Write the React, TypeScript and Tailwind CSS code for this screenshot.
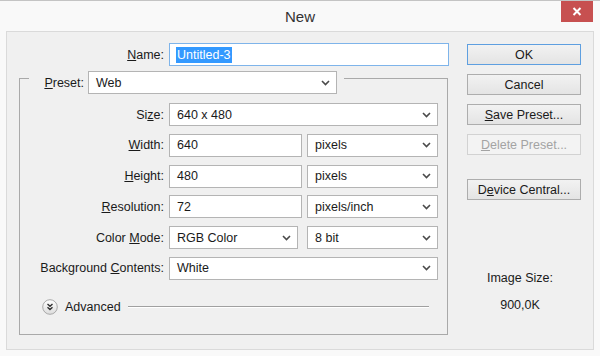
import React from "react";

const font = { fontFamily: '"Liberation Sans", Arial, sans-serif' };

// label with an access-key letter underlined
function Label({ text, u, className = "" }: { text: string; u: number; className?: string }) {
  return (
    <span className={className}>
      {text.slice(0, u)}
      <span className="underline underline-offset-1">{text[u]}</span>
      {text.slice(u + 1)}
    </span>
  );
}

function Chevron() {
  return (
    <svg width="9" height="6" viewBox="0 0 9 6" className="shrink-0">
      <path d="M1 1 L4.5 4.5 L8 1" fill="none" stroke="#4a4a4a" strokeWidth="1.6" />
    </svg>
  );
}

function Select({ value, w }: { value: string; w: string }) {
  return (
    <div className={`${w} flex h-[23px] items-center justify-between border border-[#b4b4b4] bg-white pl-[7px] pr-[6px]`}>
      <span>{value}</span>
      <Chevron />
    </div>
  );
}

function Input({ value, w }: { value: string; w: string }) {
  return (
    <div className={`${w} flex h-[23px] items-center border border-[#b4b4b4] bg-white pl-[7px]`}>
      {value}
    </div>
  );
}

function Btn({ children, primary, disabled }: { children: React.ReactNode; primary?: boolean; disabled?: boolean }) {
  return (
    <div
      className={
        "flex h-[21px] w-[114px] items-center justify-center border " +
        (disabled
          ? "border-[#d2d2d2] bg-[#f3f3f3] text-[#a3a3a3]"
          : primary
            ? "border-[#5e9fe0] bg-linear-to-b from-[#f2f2f2] to-[#e4e4e4]"
            : "border-[#adadad] bg-linear-to-b from-[#f2f2f2] to-[#e4e4e4]")
      }
    >
      {children}
    </div>
  );
}

function Row({ label, children }: { label: React.ReactNode; children: React.ReactNode }) {
  return (
    <div className="flex h-[23px] items-center">
      <div className="w-[144px] text-right">{label}</div>
      <div className="ml-[5px] flex items-center">{children}</div>
    </div>
  );
}

export default function App() {
  return (
    <div
      style={font}
      className="h-[356px] w-[600px] overflow-hidden border-t border-[#c4c4c4] bg-[#f9f9f9] text-[12.5px] leading-4 text-[#1a1a1a]"
    >
      {/* title bar */}
      <div className="flex h-[30px]">
        <div className="w-[39px]" />
        <div className="flex flex-1 items-center justify-center pt-[1px] text-[15px] text-[#333]">New</div>
        <div className="mr-[7px] flex h-[21px] w-[32px] items-center justify-center bg-[#c75050]">
          <svg width="10" height="9" viewBox="0 0 10 9">
            <path d="M1.5 1 L8.5 8 M8.5 1 L1.5 8" stroke="#fff" strokeWidth="2" />
          </svg>
        </div>
      </div>

      {/* dialog body */}
      <div className="ml-[6px] flex h-[319px] w-[588px] border border-[#dadada] bg-[#f0f0f0]">
        <div className="w-[442px]">
          <div className="mt-[11px] flex items-center">
            <div className="w-[157px] text-right">
              <Label text="Name:" u={0} />
            </div>
            <div className="ml-[5px] flex h-[23px] w-[280px] items-center border border-[#7eb4ea] bg-white pl-[6px]">
              <span className="bg-[#3399ff] px-[1px] text-white">Untitled-3</span>
            </div>
          </div>

          <div className="ml-[12px] mt-[12px] h-[257px] w-[429px] border border-[#a9a9a9]">
            <div className="-mt-[8px] ml-[9px] flex w-fit items-center bg-[#f0f0f0] pl-[9px] pr-[7px]">
              <div className="w-[46px] text-right">
                <Label text="Preset:" u={0} />
              </div>
              <div className="ml-[4px]">
                <Select value="Web" w="w-[249px]" />
              </div>
            </div>

            <div className="mt-[9px] flex flex-col gap-[7.8px]">
              <Row label={<Label text="Size:" u={2} />}>
                <Select value="640 x 480" w="w-[269px]" />
              </Row>
              <Row label={<Label text="Width:" u={0} />}>
                <Input value="640" w="w-[133px]" />
                <div className="ml-[5px]">
                  <Select value="pixels" w="w-[131px]" />
                </div>
              </Row>
              <Row label={<Label text="Height:" u={0} />}>
                <Input value="480" w="w-[133px]" />
                <div className="ml-[5px]">
                  <Select value="pixels" w="w-[131px]" />
                </div>
              </Row>
              <Row label={<Label text="Resolution:" u={0} />}>
                <Input value="72" w="w-[133px]" />
                <div className="ml-[5px]">
                  <Select value="pixels/inch" w="w-[131px]" />
                </div>
              </Row>
              <Row label={<Label text="Color Mode:" u={6} />}>
                <Select value="RGB Color" w="w-[129px]" />
                <div className="ml-[9px]">
                  <Select value="8 bit" w="w-[131px]" />
                </div>
              </Row>
              <Row label={<Label text="Background Contents:" u={11} />}>
                <Select value="White" w="w-[269px]" />
              </Row>
            </div>

            <div className="ml-[22px] mr-[18px] mt-[19px] flex items-center">
              <svg width="16" height="16" viewBox="0 0 16 16" className="shrink-0">
                <defs>
                  <linearGradient id="adv" x1="0" y1="0" x2="0" y2="1">
                    <stop offset="0" stopColor="#ffffff" />
                    <stop offset="1" stopColor="#dcdcdc" />
                  </linearGradient>
                </defs>
                <circle cx="8" cy="8" r="7.3" fill="url(#adv)" stroke="#a9a9a9" />
                <path d="M5.5 5 L8 7.3 L10.5 5 M5.5 8.3 L8 10.6 L10.5 8.3" fill="none" stroke="#333" strokeWidth="1.4" />
              </svg>
              <span className="ml-[7px]">Advanced</span>
              <div className="ml-[7px] h-[2px] flex-1 border-t border-[#a0a0a0] border-b border-b-white" />
            </div>
          </div>
        </div>

        {/* buttons */}
        <div className="ml-[18px] mt-[12px] flex w-[114px] flex-col">
          <div className="flex flex-col gap-[9px]">
            <Btn primary>OK</Btn>
            <Btn>Cancel</Btn>
            <Btn>
              <Label text="Save Preset..." u={0} />
            </Btn>
            <Btn disabled>
              <Label text="Delete Preset..." u={0} />
            </Btn>
          </div>
          <div className="mt-[24px]">
            <Btn>
              <Label text="Device Central..." u={1} />
            </Btn>
          </div>
          <div className="mt-[70px] pr-[8px] text-center">Image Size:</div>
          <div className="mt-[11px] pr-[8px] text-center">900,0K</div>
        </div>
      </div>
    </div>
  );
}
